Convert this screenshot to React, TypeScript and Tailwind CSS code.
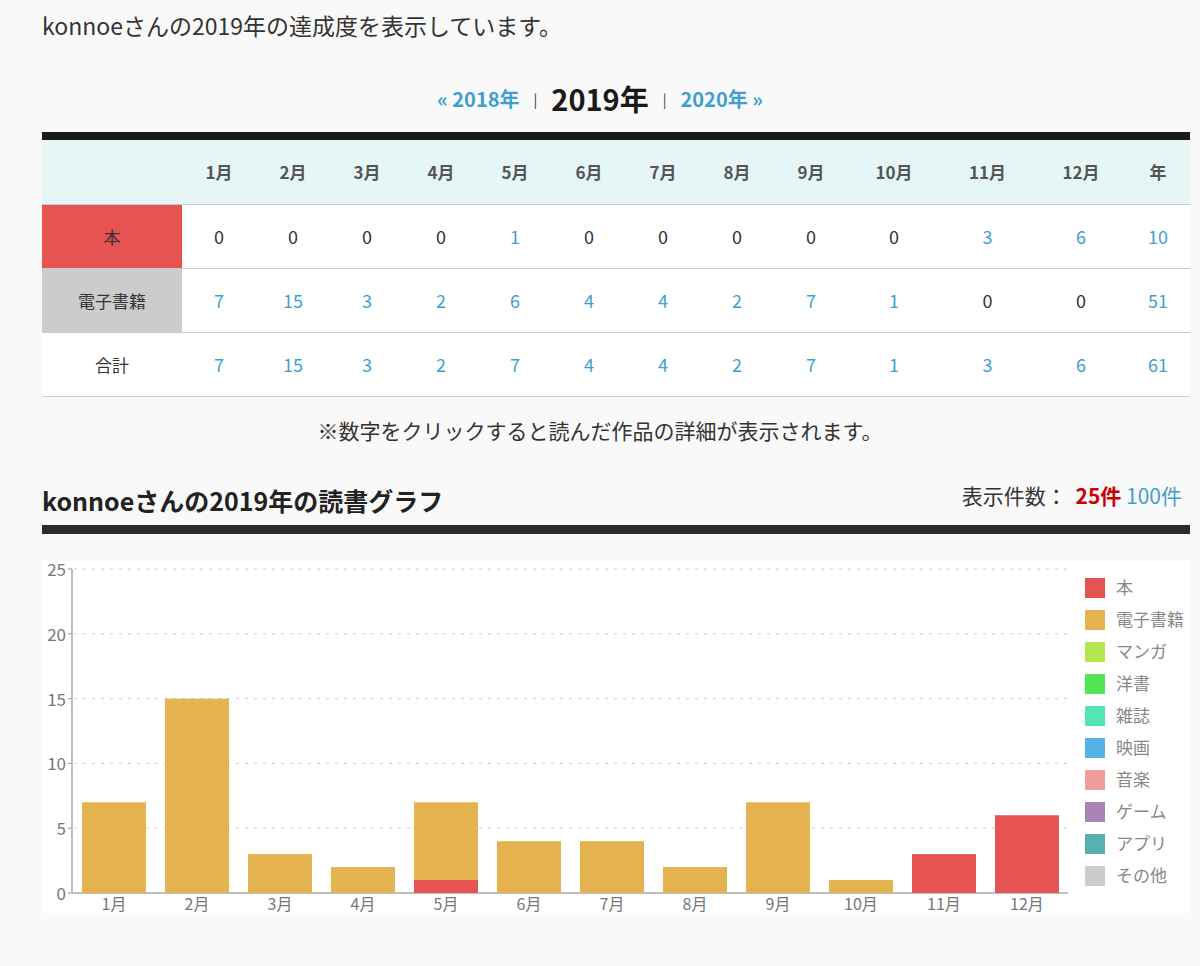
import React from "react";

const months = ["1月","2月","3月","4月","5月","6月","7月","8月","9月","10月","11月","12月"];
const hon = [0,0,0,0,1,0,0,0,0,0,3,6];
const ebook = [7,15,3,2,6,4,4,2,7,1,0,0];
const cols = "grid grid-cols-[140px_74px_74px_74px_74px_74px_74px_74px_74px_74px_92px_95px_92px_62px]";
const legend: [string,string][] = [["本","#e55353"],["電子書籍","#e4b34f"],["マンガ","#b5e54f"],["洋書","#53e553"],["雑誌","#53e5b5"],["映画","#53b3e5"],["音楽","#ee9d98"],["ゲーム","#a784b3"],["アプリ","#57b1ae"],["その他","#cccccc"]];

function Cell({ v }: { v: number }) {
  return <div className={`flex items-center justify-center ${v ? "text-[#3fa0cf]" : "text-[#333]"}`}>{v}</div>;
}

function Chart() {
  const y0 = 332, unit = 12.96;
  return (
    <svg width="1148" height="352" className="block bg-white" style={{ fontFamily: "'Noto Sans CJK JP', sans-serif" }}>
      {[0,5,10,15,20,25].map(t => (
        <g key={t}>
          {t > 0 && <line x1="32" x2="1026" y1={y0 - t*unit} y2={y0 - t*unit} stroke="#ccc" strokeDasharray="3 6" />}
          <line x1="26" x2="30" y1={y0 - t*unit} y2={y0 - t*unit} stroke="#999" />
          <text x="24" y={y0 - t*unit + 7} textAnchor="end" fontSize="17" fill="#777">{t}</text>
        </g>
      ))}
      <line x1="30" x2="30" y1="8" y2={y0} stroke="#aaa" strokeWidth="1.5" />
      <line x1="30" x2="1026" y1={y0} y2={y0} stroke="#aaa" strokeWidth="1.5" />
      {months.map((m, i) => {
        const cx = 72 + i * 83;
        const hh = hon[i]*unit, he = ebook[i]*unit;
        return (
          <g key={m}>
            {he > 0 && <rect x={cx-32} y={y0-hh-he} width="64" height={he} fill="#e4b34f" />}
            {hh > 0 && <rect x={cx-32} y={y0-hh} width="64" height={hh} fill="#e55353" />}
            <text x={cx} y={y0+17} textAnchor="middle" fontSize="16" fill="#777">{m}</text>
          </g>
        );
      })}
      {legend.map(([l, c], i) => (
        <g key={l}>
          <rect x="1043" y={17 + i*32} width="20" height="20" fill={c} />
          <text x="1074" y={33 + i*32} fontSize="17" fill="#888">{l}</text>
        </g>
      ))}
    </svg>
  );
}

export default function App() {
  return (
    <div className="w-[1200px] h-[966px] bg-[#f9f9f9] text-[#333] px-[42px] pt-[8px]" style={{ fontFamily: "'Noto Sans CJK JP', sans-serif" }}>
      <p className="text-[23px] leading-[34px]">konnoeさんの2019年の達成度を表示しています。</p>
      <div className="flex items-center justify-center mt-[38px] h-[38px] text-[#333]">
        <span className="text-[#3fa0cf] font-bold text-[20px]">« 2018年</span>
        <span className="mx-[14px] text-[14px]">|</span>
        <span className="font-bold text-[29px] text-[#1a1a1a]">2019年</span>
        <span className="mx-[14px] text-[14px]">|</span>
        <span className="text-[#3fa0cf] font-bold text-[20px]">2020年 »</span>
      </div>
      <div className="mt-[14px] w-[1148px] border-t-[8px] border-[#1a1a1a] text-[18px]">
        <div className={`${cols} h-[65px] bg-[#e6f5f5] border-b border-[#ccc] font-bold text-[#555] text-[17px]`}>
          <div />
          {[...months, "年"].map(m => <div key={m} className="flex items-center justify-center">{m}</div>)}
        </div>
        <div className={`${cols} h-[64px] bg-white border-b border-[#ccc]`}>
          <div className="bg-[#e55353] flex items-center justify-center text-[17px]">本</div>
          {hon.map((v, i) => <Cell key={i} v={v} />)}
          <Cell v={10} />
        </div>
        <div className={`${cols} h-[64px] bg-white border-b border-[#ccc]`}>
          <div className="bg-[#cccccc] flex items-center justify-center text-[17px]">電子書籍</div>
          {ebook.map((v, i) => <Cell key={i} v={v} />)}
          <Cell v={51} />
        </div>
        <div className={`${cols} h-[64px] bg-white border-b border-[#ccc]`}>
          <div className="flex items-center justify-center text-[17px]">合計</div>
          {ebook.map((v, i) => <Cell key={i} v={v + hon[i]} />)}
          <Cell v={61} />
        </div>
      </div>
      <p className="text-center text-[21px] mt-[18px]">※数字をクリックすると読んだ作品の詳細が表示されます。</p>
      <div className="w-[1148px] mt-[36px] flex items-end justify-between pb-[8px] border-b-[9px] border-[#2b2b2b]">
        <h2 className="font-bold text-[25px] leading-[34px] text-[#222]">konnoeさんの2019年の読書グラフ</h2>
        <div className="text-[21px] leading-[32px] pr-[8px] -translate-y-[6px]">
          表示件数： <span className="font-bold text-[#cc0000] ml-[4px]">25件</span> <span className="text-[#3fa0cf]">100件</span>
        </div>
      </div>
      <div className="mt-[27px]"><Chart /></div>
    </div>
  );
}
